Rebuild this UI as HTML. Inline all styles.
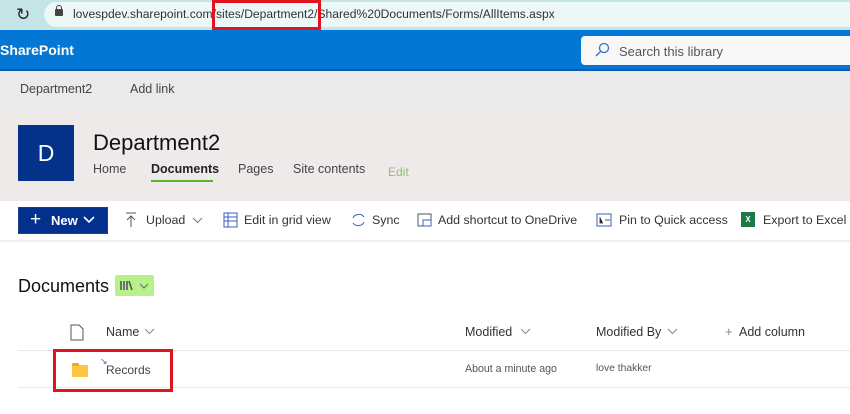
<!DOCTYPE html>
<html><head><meta charset="utf-8"><style>
*{margin:0;padding:0;box-sizing:border-box}
body{width:850px;height:414px;overflow:hidden;background:#fff;font-family:"Liberation Sans",sans-serif;position:relative;color:#323130}
.a{position:absolute;white-space:nowrap}
.c{font-size:12.4px;color:#333;top:213px}
</style></head><body>
<div class="a" style="left:0;top:0;width:850px;height:30px;background:#c4e4e6"></div>
<div class="a" style="left:44px;top:2px;width:820px;height:25px;border-radius:13px;background:#ecf7f8"></div>
<div class="a" style="left:16px;top:5px;font-size:17px;color:#222">&#x21bb;</div>
<div class="a" style="left:55px;top:9px;width:8px;height:7px;background:#444;border-radius:1px"></div>
<div class="a" style="left:56px;top:5px;width:6px;height:6px;border:1.5px solid #444;border-bottom:none;border-radius:3px 3px 0 0"></div>
<div class="a" style="left:73px;top:7px;font-size:12.1px;color:#333">lovespdev.sharepoint.com/sites/Department2/Shared%20Documents/Forms/AllItems.aspx</div>
<div class="a" style="left:212px;top:0;width:109px;height:30px;border:3px solid #e0141e"></div>
<div class="a" style="left:0;top:30px;width:850px;height:41px;background:#0476d4;border-bottom:2px solid #0b5cb0"></div>
<div class="a" style="left:0;top:42px;font-size:14px;font-weight:bold;color:#fff">SharePoint</div>
<div class="a" style="left:581px;top:36px;width:280px;height:29px;background:#f8f8f8;border-radius:4px"></div>
<svg class="a" style="left:594px;top:42px" width="16" height="16" viewBox="0 0 16 16"><circle cx="10" cy="6" r="4.5" fill="none" stroke="#3a6fc2" stroke-width="1.3"/><path d="M7 9 L2 14" stroke="#3a6fc2" stroke-width="1.4"/></svg>
<div class="a" style="left:619px;top:44px;font-size:13px;color:#555">Search this library</div>
<div class="a" style="left:0;top:71px;width:850px;height:36px;background:#eaeaea"></div>
<div class="a" style="left:20px;top:82px;font-size:12.5px;color:#444">Department2</div>
<div class="a" style="left:130px;top:82px;font-size:12.5px;color:#444">Add link</div>
<div class="a" style="left:0;top:107px;width:850px;height:94px;background:#eeeae9"></div>
<div class="a" style="left:18px;top:125px;width:56px;height:56px;background:#04318a;color:#fff;font-size:23px;text-align:center;line-height:56px">D</div>
<div class="a" style="left:93px;top:130px;font-size:22px;color:#111">Department2</div>
<div class="a" style="left:93px;top:162px;font-size:12.5px;color:#444">Home</div>
<div class="a" style="left:151px;top:162px;font-size:12.5px;color:#222;font-weight:bold">Documents</div>
<div class="a" style="left:151px;top:180px;width:62px;height:2px;background:#59b32c"></div>
<div class="a" style="left:238px;top:162px;font-size:12.5px;color:#444">Pages</div>
<div class="a" style="left:293px;top:162px;font-size:12.5px;color:#444">Site contents</div>
<div class="a" style="left:388px;top:165px;font-size:12px;color:#8fc06a">Edit</div>
<div class="a" style="left:0;top:240px;width:850px;height:2px;background:#f0f0f0"></div>
<div class="a" style="left:18px;top:207px;width:90px;height:27px;background:#03308d;border:1px solid #1a3f8e"></div>
<div class="a" style="left:30px;top:209px;font-size:19px;color:#fff">+</div>
<div class="a" style="left:51px;top:213px;font-size:13px;color:#fff;font-weight:bold">New</div>
<svg class="a" style="left:83px;top:216px" width="12" height="8"><path d="M1 1 L6 6 L11 1" stroke="#fff" stroke-width="1.6" fill="none"/></svg>
<svg class="a" style="left:125px;top:212px" width="12" height="16"><path d="M1 1H11M6 4V15M2 8L6 4L10 8" stroke="#555" fill="none"/></svg>
<div class="a c" style="left:146px">Upload</div>
<svg class="a" style="left:192px;top:217px" width="11" height="7"><path d="M1 1L5.5 5.5L10 1" stroke="#777" fill="none"/></svg>
<svg class="a" style="left:223px;top:212px" width="15" height="16"><rect x="1" y="1" width="13" height="14" fill="none" stroke="#3b5fb8"/><path d="M1 5H14M1 9H14M5 1V15" stroke="#3b5fb8"/></svg>
<div class="a c" style="left:244px">Edit in grid view</div>
<svg class="a" style="left:350px;top:212px" width="17" height="16"><path d="M3 6A6 5 0 0 1 14 5M14 10A6 5 0 0 1 3 11" stroke="#3b5fb8" fill="none"/></svg>
<div class="a c" style="left:372px">Sync</div>
<svg class="a" style="left:417px;top:212px" width="16" height="16"><rect x="1" y="2" width="13" height="12" fill="none" stroke="#555"/><rect x="6" y="8" width="8" height="6" fill="none" stroke="#3b5fb8"/></svg>
<div class="a c" style="left:438px">Add shortcut to OneDrive</div>
<svg class="a" style="left:596px;top:212px" width="16" height="16"><rect x="1" y="2" width="14" height="12" fill="none" stroke="#3b5fb8"/><path d="M4 5V11H7M9 8H14" stroke="#555"/></svg>
<div class="a c" style="left:619px">Pin to Quick access</div>
<div class="a" style="left:741px;top:212px;width:14px;height:15px;background:#1d7a44;color:#fff;font-size:8px;font-weight:bold;text-align:center;line-height:15px">X</div>
<div class="a c" style="left:763px">Export to Excel</div>
<div class="a" style="left:18px;top:276px;font-size:18px;color:#111">Documents</div>
<div class="a" style="left:115px;top:275px;width:39px;height:21px;background:#b8f08a;border-radius:2px"></div>
<svg class="a" style="left:120px;top:280px" width="14" height="11"><path d="M1 1V10M4 1V10M7 1V10M9 1L12 10" stroke="#556" stroke-width="1.6"/></svg>
<svg class="a" style="left:139px;top:283px" width="10" height="6"><path d="M1 1L5 5L9 1" stroke="#666" fill="none"/></svg>
<svg class="a" style="left:70px;top:324px" width="14" height="17"><path d="M1 1H9L13 5V16H1Z" fill="none" stroke="#555"/></svg>
<div class="a" style="left:106px;top:325px;font-size:12.5px;color:#333">Name</div>
<svg class="a" style="left:144px;top:328px" width="11" height="7"><path d="M1 1L5.5 5.5L10 1" stroke="#888" fill="none"/></svg>
<div class="a" style="left:465px;top:325px;font-size:12.5px;color:#333">Modified</div>
<svg class="a" style="left:520px;top:328px" width="11" height="7"><path d="M1 1L5.5 5.5L10 1" stroke="#888" fill="none"/></svg>
<div class="a" style="left:596px;top:325px;font-size:12.5px;color:#333">Modified By</div>
<svg class="a" style="left:667px;top:328px" width="11" height="7"><path d="M1 1L5.5 5.5L10 1" stroke="#888" fill="none"/></svg>
<div class="a" style="left:725px;top:324px;font-size:13px;color:#888">+</div>
<div class="a" style="left:739px;top:325px;font-size:12.5px;color:#333">Add column</div>
<div class="a" style="left:18px;top:350px;width:832px;height:1px;background:#e8e8e8"></div>
<div class="a" style="left:72px;top:365px;width:16px;height:12px;background:#fcc542;border-radius:1px"></div>
<div class="a" style="left:72px;top:363px;width:7px;height:3px;background:#e8a830;border-radius:1px 1px 0 0"></div>
<div class="a" style="left:100px;top:356px;font-size:9px;color:#3b5fb8">&#x2198;</div>
<div class="a" style="left:106px;top:363px;font-size:12px;color:#444">Records</div>
<div class="a" style="left:465px;top:363px;font-size:10.6px;color:#555">About a minute ago</div>
<div class="a" style="left:596px;top:363px;font-size:10.3px;color:#555">love thakker</div>
<div class="a" style="left:18px;top:387px;width:832px;height:1px;background:#e8e8e8"></div>
<div class="a" style="left:53px;top:349px;width:120px;height:43px;border:3px solid #e0141e"></div>
</body></html>
